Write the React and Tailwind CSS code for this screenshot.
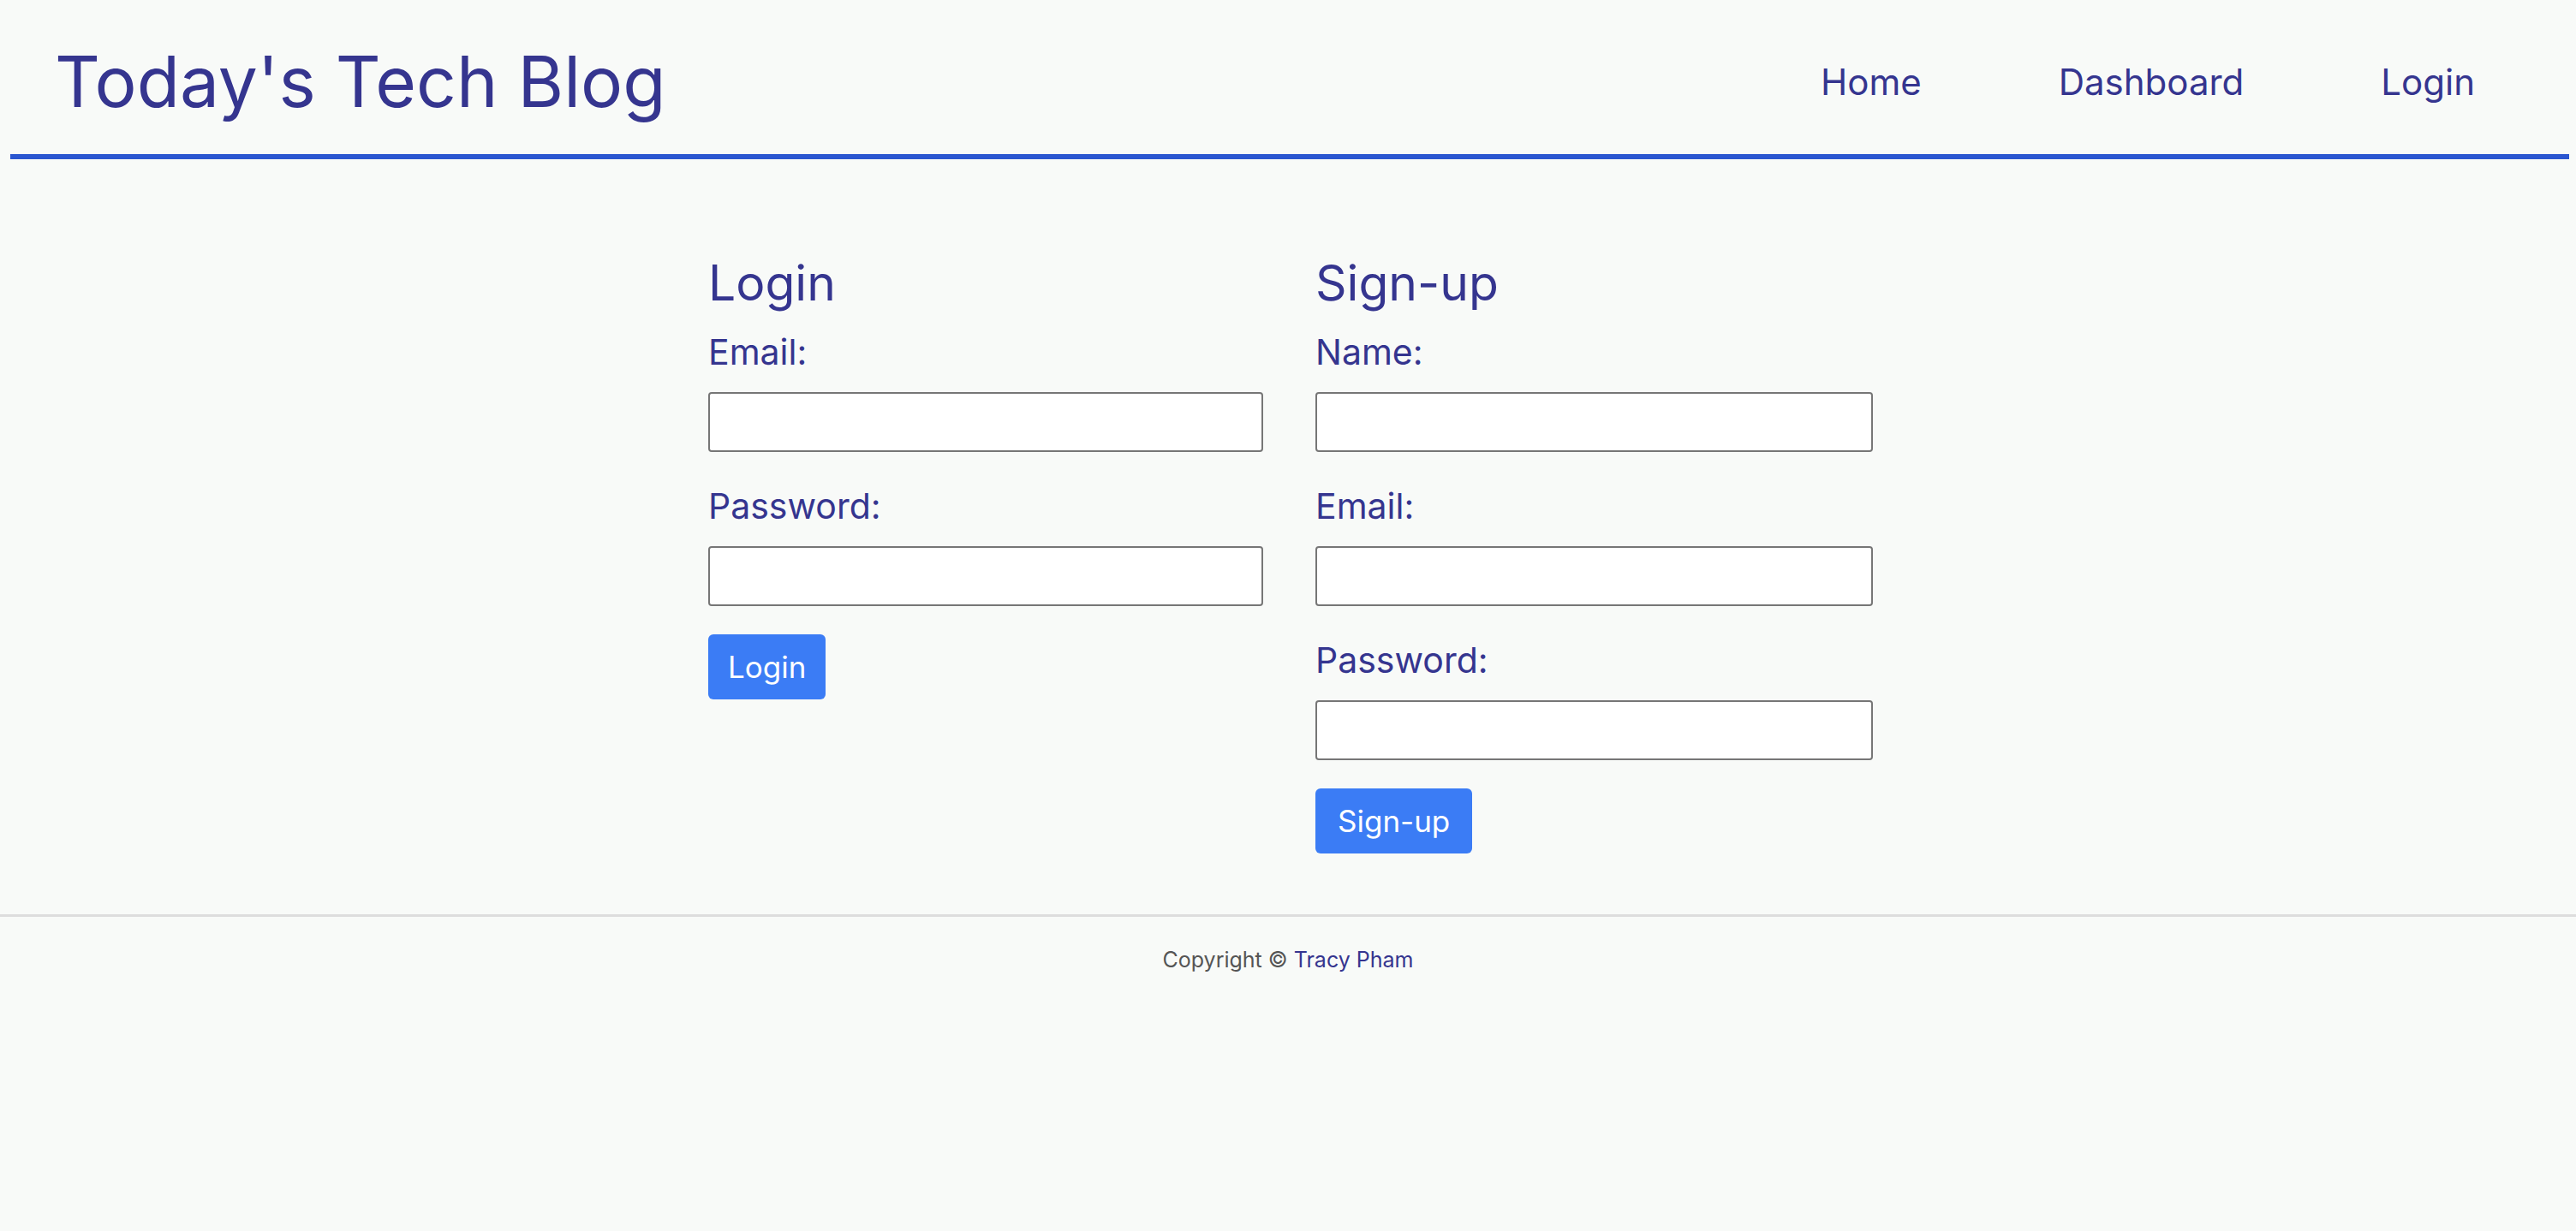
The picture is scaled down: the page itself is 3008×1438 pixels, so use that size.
import React from 'react';

const font = { fontFamily: 'Inter, "Noto Sans", sans-serif' };

function Field({ label, type = 'text', first }) {
    return (
        <div className={first ? '' : 'mt-[43px]'}>
            <label className="block text-[41px] leading-[40px] text-[#35358f]">{label}</label>
            <input
                type={type}
                className="mt-[27px] block h-[70px] w-full rounded-[4px] border-2 border-[#767676] bg-white px-3 text-[30px] outline-none"
            />
        </div>
    );
}

export default function App() {
    return (
        <div className="min-h-screen bg-[#f8faf8] text-[#35358f]" style={font}>
            <header className="ml-3 mr-2 flex h-[186px] items-center justify-between border-b-[6px] border-[#2a56d0] pt-3 pl-[52px] pr-[110px]">
                <h1 className="text-[82px] leading-[82px] text-[#35358f]">Today's Tech Blog</h1>
                <nav className="flex items-center gap-[160px] text-[42px] leading-[42px]">
                    <a href="#" className="text-[#35358f]">Home</a>
                    <a href="#" className="text-[#35358f]">Dashboard</a>
                    <a href="#" className="text-[#35358f]">Login</a>
                </nav>
            </header>

            <main className="flex justify-center gap-[61px] pt-[117px] pb-[71px] pl-[6px]">
                <section className="w-[648px]">
                    <h2 className="text-[57px] leading-[56px]">Login</h2>
                    <form className="mt-[32px]" onSubmit={(e) => e.preventDefault()}>
                        <Field label="Email:" type="email" first />
                        <Field label="Password:" type="password" />
                        <button className="mt-[33px] h-[76px] rounded-[6px] bg-[#3b7cf5] px-[23px] text-[35px] text-white">
                            Login
                        </button>
                    </form>
                </section>
                <section className="w-[651px]">
                    <h2 className="text-[57px] leading-[56px]">Sign-up</h2>
                    <form className="mt-[32px]" onSubmit={(e) => e.preventDefault()}>
                        <Field label="Name:" first />
                        <Field label="Email:" type="email" />
                        <Field label="Password:" type="password" />
                        <button className="mt-[33px] h-[76px] rounded-[6px] bg-[#3b7cf5] px-[26px] text-[35px] text-white">
                            Sign-up
                        </button>
                    </form>
                </section>
            </main>

            <footer className="border-t-[3px] border-[#dddddd] pt-[38px] text-center text-[25px] leading-[25px] text-[#555555]">
                Copyright © <a href="#" className="text-[#35358f]">Tracy Pham</a>
            </footer>
        </div>
    );
}
